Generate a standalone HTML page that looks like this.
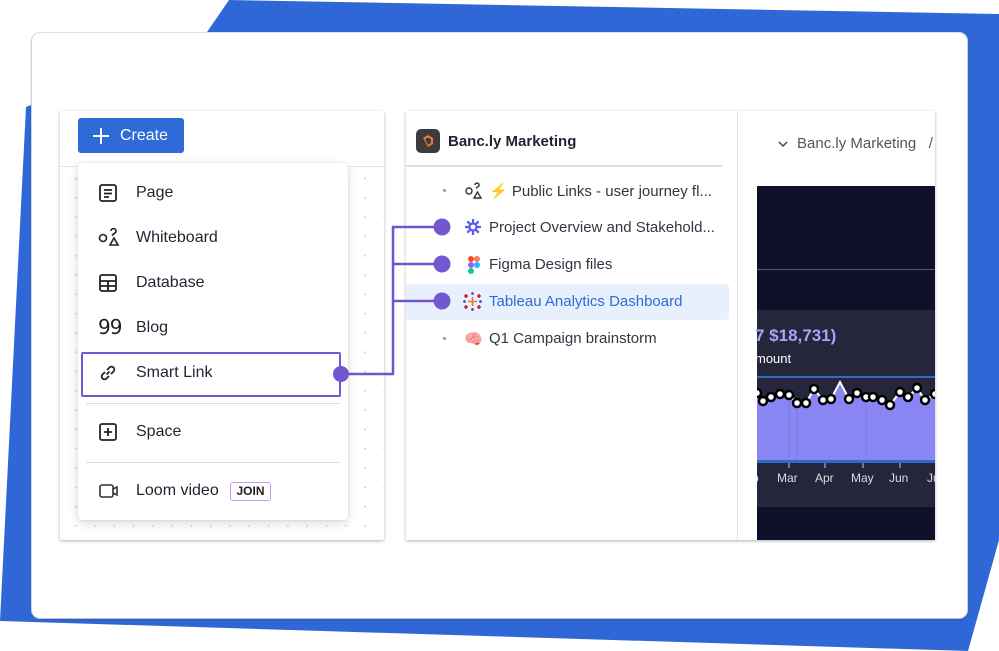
<!DOCTYPE html>
<html><head><meta charset="utf-8"><style>
*{box-sizing:border-box;margin:0;padding:0}
body{width:999px;height:651px;overflow:hidden;background:#fff;font-family:"Liberation Sans",sans-serif;position:relative}
.abs{position:absolute}
.card{left:32px;top:33px;width:935px;height:585px;background:#fff;border-radius:8px;box-shadow:0 1px 3px rgba(0,0,0,.25),0 0 0 1px #e4e8f0}
.lp{left:60px;top:111px;width:324px;height:429px;background:#fff;box-shadow:0 1px 3px rgba(0,0,0,.3);border-radius:2px;overflow:hidden;
background-image:radial-gradient(circle,#d4d4d4 0.8px,transparent 1.2px);background-size:19.3px 19.3px;background-position:6px 0}
.lph{left:0;top:0;width:324px;height:56px;background:#fff;border-bottom:1px solid #e3e3e3}
.btn{left:18px;top:7px;width:106px;height:35px;background:#2f6bd6;border-radius:3px;color:#fff;font-size:16px;line-height:35px;padding-left:42px}
.menu{left:78px;top:163px;width:270px;height:357px;background:#fff;border-radius:4px;box-shadow:0 3px 10px rgba(0,0,0,.15),0 0 1px rgba(0,0,0,.2)}
.it{position:absolute;left:58px;font-size:16px;color:#1f2430}
.ic{position:absolute;left:20px}
.rp{left:406px;top:111px;width:529px;height:429px;background:#fff;box-shadow:0 1px 3px rgba(0,0,0,.3);overflow:hidden}
.row{position:absolute;left:83px;font-size:15px;color:#303642;white-space:nowrap}
</style></head><body>
<svg class="abs" style="left:0;top:0" width="999" height="651">
<polygon points="229,0 999,14 999,540 968,651 0,621 26,107 205,35" fill="#2f68d6"/>
</svg>
<div class="abs card"></div>
<div class="abs lp">
 <div class="abs lph"><div class="abs btn">Create</div>
 <svg class="abs" style="left:31px;top:15px" width="20" height="20"><path d="M10 2v16M2 10h16" stroke="#fff" stroke-width="2"/></svg></div>
</div>
<div class="abs menu">
 <svg class="ic" style="top:20px" width="20" height="20" fill="none" stroke="#222" stroke-width="1.8"><rect x="2" y="2" width="16" height="16" rx="2"/><path d="M6 7h8M6 10.5h8M6 14h5"/></svg>
 <div class="it" style="top:21px">Page</div>
 <svg class="ic" style="top:65px" width="22" height="20" fill="none" stroke="#222" stroke-width="1.6"><circle cx="5" cy="10" r="3.5"/><path d="M13 3a2.5 2.5 0 1 1 3 2.5l-2 2M12 17l4-7 4 7z"/></svg>
 <div class="it" style="top:66px">Whiteboard</div>
 <svg class="ic" style="top:110px" width="20" height="20" fill="none" stroke="#222" stroke-width="1.8"><rect x="2" y="2" width="16" height="16" rx="2"/><path d="M2 8h16M2 13h16M10 8v10"/></svg>
 <div class="it" style="top:111px">Database</div>
 <div class="ic" style="top:152px;font-size:20px;color:#222;letter-spacing:-1px;font-family:'DejaVu Sans',sans-serif">99</div>
 <div class="it" style="top:156px">Blog</div>
 <svg class="ic" style="top:200px" width="20" height="20" fill="none" stroke="#222" stroke-width="1.8"><path d="M8.5 11.5l3-3M7 9l-2.5 2.5a2.8 2.8 0 0 0 4 4L11 13M13 11l2.5-2.5a2.8 2.8 0 0 0-4-4L9 7"/></svg>
 <div class="it" style="top:201px">Smart Link</div>
 <div class="abs" style="left:8px;top:240px;width:254px;height:1px;background:#ddd"></div>
 <svg class="ic" style="top:259px" width="20" height="20" fill="none" stroke="#222" stroke-width="1.8"><rect x="2" y="2" width="16" height="16" rx="2"/><path d="M10 6v8M6 10h8"/></svg>
 <div class="it" style="top:260px">Space</div>
 <div class="abs" style="left:8px;top:299px;width:254px;height:1px;background:#ddd"></div>
 <svg class="ic" style="top:318px" width="22" height="20" fill="none" stroke="#333" stroke-width="1.6"><rect x="2" y="4" width="13" height="12" rx="2"/><path d="M15 8l4-2v8l-4-2"/></svg>
 <div class="it" style="top:319px">Loom video</div>
 <div class="abs" style="left:152px;top:319px;width:41px;height:19px;border:1.5px solid #c99bf2;border-radius:3px;font-size:12px;font-weight:bold;color:#222;text-align:center;line-height:16px">JOIN</div>
</div>
<div class="abs" style="left:81px;top:352px;width:260px;height:45px;border:2.5px solid #7457d4;border-radius:2px"></div>
<div class="abs rp">
 <div class="abs" style="left:10px;top:18px;width:24px;height:24px;background:#3c3c3c;border-radius:5px"></div>
 <svg class="abs" style="left:14px;top:22px" width="16" height="16"><path d="M3 5l5-3 5 3v6l-5 3z" fill="#f07a3a"/><path d="M5 6l3-1.5 3 1.5v4l-3 2z" fill="#3c3c3c"/></svg>
 <div class="abs" style="left:42px;top:22px;font-size:15px;font-weight:bold;color:#1f2430">Banc.ly Marketing</div>
 <div class="abs" style="left:0;top:54px;width:316px;height:2px;background:#ddd"></div>
 <div class="abs" style="left:331px;top:0;width:1px;height:429px;background:#e3e3e3"></div>
 <div class="abs" style="left:0;top:173px;width:323px;height:36px;background:#e9f0fd;border-radius:3px"></div>
 <div class="abs" style="left:37px;top:78px;width:3px;height:3px;background:#999;border-radius:50%"></div>
 <div class="abs" style="left:37px;top:226px;width:3px;height:3px;background:#999;border-radius:50%"></div>
 <svg class="abs" style="left:58px;top:71px" width="18" height="18" fill="none" stroke="#333" stroke-width="1.4"><circle cx="5" cy="9" r="3"/><path d="M11 3a2 2 0 1 1 2.5 2l-1.5 1.5M10 16l3.5-6 3.5 6z"/></svg>
 <div class="row" style="top:71px"><span style="color:#f2b233">⚡</span> Public Links - user journey fl...</div>
 <svg class="abs" style="left:58px;top:107px" width="18" height="18" stroke="#5b5bf0" stroke-width="2.2"><path d="M9 1v16M1 9h16M3.3 3.3l11.4 11.4M14.7 3.3L3.3 14.7"/><circle cx="9" cy="9" r="3.5" fill="#fff"/></svg>
 <div class="row" style="top:108px">Project Overview and Stakehold...</div>
 <svg class="abs" style="left:62px;top:145px" width="12" height="18"><circle cx="3" cy="3" r="3" fill="#f24e1e"/><circle cx="9" cy="3" r="3" fill="#ff7262"/><circle cx="3" cy="9" r="3" fill="#a259ff"/><circle cx="9" cy="9" r="3" fill="#1abcfe"/><circle cx="3" cy="15" r="3" fill="#0acf83"/></svg>
 <div class="row" style="top:145px">Figma Design files</div>
 <svg class="abs" style="left:57px;top:181px" width="19" height="19" stroke-width="1.6"><path d="M9.5 5v9M5 9.5h9" stroke="#e8762c"/><path d="M3 2v4M1 4h4M16 2v4M14 4h4M3 13v4M1 15h4M16 13v4M14 15h4" stroke="#c72035"/><path d="M9.5 0v3M8 1.5h3M9.5 16v3M8 17.5h3M0 9.5h3M1.5 8v3M16 9.5h3M17.5 8v3" stroke="#5b6591"/></svg>
 <div class="row" style="top:182px;color:#2f6bd6">Tableau Analytics Dashboard</div>
 <div class="abs" style="left:58px;top:219px;font-size:15px">🧠</div>
 <div class="row" style="top:219px">Q1 Campaign brainstorm</div>
 <svg class="abs" style="left:371px;top:28px" width="12" height="10" fill="none" stroke="#444" stroke-width="1.5"><path d="M2 3l4 4 4-4"/></svg>
 <div class="abs" style="left:391px;top:24px;font-size:15px;color:#505666;white-space:nowrap">Banc.ly Marketing &nbsp;&nbsp;/</div>
 <div class="abs" style="left:351px;top:75px;width:178px;height:354px;background:#0f1029">
  <div class="abs" style="left:0;top:83px;width:178px;height:1px;background:#55557a"></div>
  <div class="abs" style="left:0;top:124px;width:178px;height:197px;background:#25263b"></div>
  <div class="abs" style="left:-2px;top:140px;font-size:17px;font-weight:bold;color:#a9a4f7;white-space:nowrap">7 $18,731)</div>
  <div class="abs" style="left:-2px;top:165px;font-size:13px;color:#fff">mount</div>
  <svg class="abs" style="left:0;top:190px" width="178" height="110">
   <rect x="0" y="0" width="178" height="2" fill="#2e6bc4"/>
   <polygon points="0,17 6,25 14,21 23,18 32,19 40,27 49,27 57,13 66,24 74,23 83,6 92,23 100,17 109,21 116,21 125,24 133,29 143,16 151,21 160,12 168,24 178,18 178,85 0,85" fill="#8986f3"/>
   <path d="M32 19v66M40 27v58M109 21v64" stroke="#7a77e0" stroke-width="1"/>
   <polyline points="0,17 6,25 14,21 23,18 32,19 40,27 49,27 57,13 66,24 74,23 83,6 92,23 100,17 109,21 116,21 125,24 133,29 143,16 151,21 160,12 168,24 178,18" fill="none" stroke="#fff" stroke-width="2"/>
   <g fill="#fff" stroke="#000" stroke-width="2.5"><circle cx="0" cy="17" r="4"/><circle cx="6" cy="25" r="4"/><circle cx="14" cy="21" r="4"/><circle cx="23" cy="18" r="4"/><circle cx="32" cy="19" r="4"/><circle cx="40" cy="27" r="4"/><circle cx="49" cy="27" r="4"/><circle cx="57" cy="13" r="4"/><circle cx="66" cy="24" r="4"/><circle cx="74" cy="23" r="4"/><circle cx="92" cy="23" r="4"/><circle cx="100" cy="17" r="4"/><circle cx="109" cy="21" r="4"/><circle cx="116" cy="21" r="4"/><circle cx="125" cy="24" r="4"/><circle cx="133" cy="29" r="4"/><circle cx="143" cy="16" r="4"/><circle cx="151" cy="21" r="4"/><circle cx="160" cy="12" r="4"/><circle cx="168" cy="24" r="4"/><circle cx="178" cy="18" r="4"/></g>
   <rect x="0" y="84" width="178" height="3" fill="#2e6bc4"/>
   <path d="M32 87v5M68 87v5M106 87v5M143 87v5" stroke="#ccc"/>
   <g fill="#ddd" font-size="12" font-family="Liberation Sans,sans-serif"><text x="-5" y="106">b</text><text x="20" y="106">Mar</text><text x="58" y="106">Apr</text><text x="94" y="106">May</text><text x="132" y="106">Jun</text><text x="170" y="106">Ju</text></g>
  </svg>
 </div>
</div>
<svg class="abs" style="left:0;top:0" width="999" height="651">
 <g stroke="#6f55d0" stroke-width="2.5" fill="none"><path d="M341 374H393V227H442M393 264H442M393 301H442"/></g>
 <g fill="#7257d1"><circle cx="341" cy="374" r="8"/><circle cx="442" cy="227" r="8.5"/><circle cx="442" cy="264" r="8.5"/><circle cx="442" cy="301" r="8.5"/></g>
</svg>
</body></html>
